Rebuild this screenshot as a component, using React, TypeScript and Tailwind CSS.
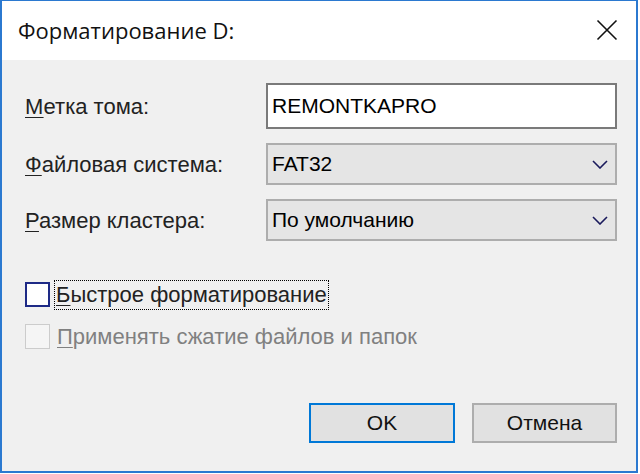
import React from 'react';

function Chevron() {
  return (
    <svg width="16" height="9" viewBox="0 0 16 9" className="shrink-0">
      <path d="M1 1 L8 8 L15 1" fill="none" stroke="#1a1a5c" strokeWidth="1.6" />
    </svg>
  );
}

function Label({ k, rest }: { k: string; rest: string }) {
  return (
    <span>
      <span className="underline decoration-1 underline-offset-[3px]">{k}</span>
      {rest}
    </span>
  );
}

export default function App() {
  return (
    <div
      className="w-[640px] h-[474px] bg-white text-black overflow-hidden"
      style={{ fontFamily: '"Liberation Sans", Arial, sans-serif' }}>
      <div className="h-[473px] w-[638px] border-l-2 border-r-2 border-b-2 border-t border-[#2b79d0] flex flex-col">
        {/* Title bar */}
        <div className="h-[59px] bg-white flex items-center justify-between pl-[16px] pr-[18px]">
          <span
            className="text-[22px] text-[#111]"
            style={{ fontFamily: '"Open Sans", "Noto Sans", sans-serif' }}>
            Форматирование D:
          </span>
          <svg width="22" height="22" viewBox="0 0 22 22" className="-mt-[2px]">
            <path d="M1.5 1.5 L20.5 20.5 M20.5 1.5 L1.5 20.5" stroke="#111" strokeWidth="1.6" />
          </svg>
        </div>

        {/* Body */}
        <div className="flex-1 bg-[#f0f0f0] pl-[23px] pr-[19px] pt-[23px] flex flex-col">
          <div className="grid grid-cols-[241px_1fr] gap-y-[14px] items-center text-[22px] text-[#222]">
            <Label k="М" rest="етка тома:" />
            <div className="h-[46px] bg-white border-2 border-[#7a7a7a] flex items-center px-[4px] text-[21px] text-black">
              REMONTKAPRO
            </div>
            <Label k="Ф" rest="айловая система:" />
            <div className="h-[42px] bg-[#e5e5e5] border-2 border-[#adadad] flex items-center justify-between pl-[4px] pr-[7px] text-[21px] text-black">
              <span>FAT32</span>
              <Chevron />
            </div>
            <Label k="Р" rest="азмер кластера:" />
            <div className="h-[42px] bg-[#e5e5e5] border-2 border-[#adadad] flex items-center justify-between pl-[4px] pr-[7px] text-[21px] text-black">
              <span>По умолчанию</span>
              <Chevron />
            </div>
          </div>

          <div className="mt-[39px] flex flex-col gap-[13px] text-[22px]">
            <div className="h-[29px] flex items-center">
              <div className="w-[25px] h-[25px] border-2 border-[#1e2a86] bg-white" />
              <span className="ml-[4px] h-[30px] px-[1px] border border-dotted border-black text-[#222] leading-[28px]">
                <Label k="Б" rest="ыстрое форматирование" />
              </span>
            </div>
            <div className="h-[29px] flex items-center">
              <div className="w-[25px] h-[25px] border border-[#cccccc] bg-[#f5f5f5]" />
              <span className="ml-[7px] text-[#808080] leading-[28px]">
                <Label k="П" rest="рименять сжатие файлов и папок" />
              </span>
            </div>
          </div>

          <div className="mt-auto mb-[28px] flex justify-end gap-[17px]">
            <button className="w-[146px] h-[40px] bg-[#e1e1e1] border-2 border-[#0078d7] text-[21px] text-[#111]">
              OK
            </button>
            <button className="w-[145px] h-[40px] bg-[#e1e1e1] border-2 border-[#adadad] text-[21px] text-[#111]">
              Отмена
            </button>
          </div>
        </div>
      </div>
    </div>
  );
}
